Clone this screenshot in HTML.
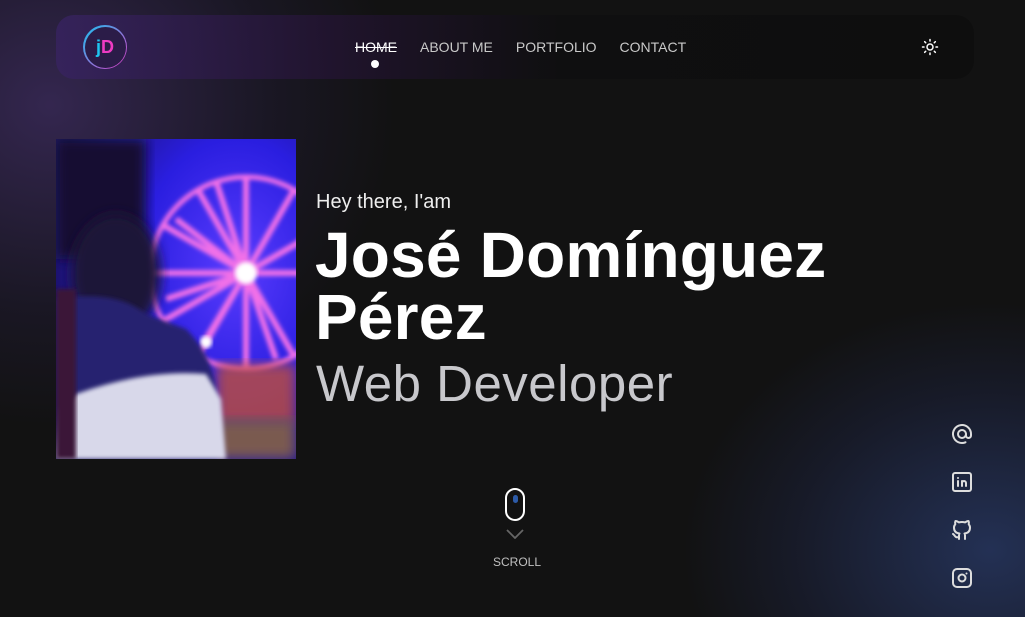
<!DOCTYPE html>
<html><head><meta charset="utf-8"><style>
*{margin:0;padding:0;box-sizing:border-box}
html,body{width:1025px;height:617px;overflow:hidden;background:#121212}
#w{position:relative;width:1025px;height:617px;overflow:hidden;background:#121212;font-family:"Liberation Sans",sans-serif}
.glow1{position:absolute;left:-300px;top:-220px;width:700px;height:650px;background:radial-gradient(ellipse at center,rgba(80,55,130,.55),rgba(45,35,80,.28) 45%,rgba(18,18,18,0) 70%)}
.glow2{position:absolute;left:680px;top:300px;width:620px;height:500px;background:radial-gradient(ellipse at center,rgba(45,65,120,.65),rgba(35,45,90,.3) 45%,rgba(18,18,18,0) 70%)}
.nav{position:absolute;left:56px;top:15px;width:918px;height:64px;border-radius:18px;background:linear-gradient(90deg,rgba(55,35,95,.85),rgba(35,20,50,.8) 30%,#0f0f10 55%,#0e0e0e)}
.logo{position:absolute;left:27px;top:10px;width:44px;height:44px;border-radius:50%;padding:1.5px;background:linear-gradient(135deg,#18c3f0,#e43ac8)}
.logo div{width:100%;height:100%;border-radius:50%;background:#2b1c48;font:bold 18px "Liberation Sans",sans-serif;text-align:center;line-height:41px}
.links{position:absolute;left:299px;top:24px;font-size:14px;color:#c9c9c9;white-space:nowrap}
.links span{margin-right:23px}
.home{color:#fff;text-decoration:line-through}
.dot{position:absolute;left:315px;top:45px;width:8px;height:8px;border-radius:50%;background:#fff}
.photo{position:absolute;left:56px;top:139px;width:240px;height:320px;overflow:hidden}
.t1{position:absolute;left:316px;top:191px;font-size:20px;color:#eee}
.t2{position:absolute;left:315px;top:224px;font-size:64px;font-weight:bold;color:#fff;line-height:62px;letter-spacing:.2px;white-space:nowrap}
.t3{position:absolute;left:316px;top:354px;font-size:51px;color:#c8c8cc;letter-spacing:.5px;white-space:nowrap}
.mouse{position:absolute;left:505px;top:488px;width:20px;height:33px;border:2px solid #fff;border-radius:10px}
.mouse i{position:absolute;left:6px;top:5px;width:5px;height:8px;border-radius:3px;background:#2d5ba8}
.scroll{position:absolute;left:493px;top:555px;font-size:12px;color:#c0c0c0}
.soc{position:absolute;left:950px}
</style></head><body><div id="w">
<div class="glow1"></div><div class="glow2"></div>
<div class="nav">
 <div class="logo"><div><span style="color:#1ec6f0">j</span><span style="color:#ee3bc3">D</span></div></div>
 <div class="links"><span class="home">HOME</span><span>ABOUT ME</span><span>PORTFOLIO</span><span>CONTACT</span></div>
 <div class="dot"></div>
 <svg style="position:absolute;left:865px;top:23px" width="18" height="18" viewBox="0 0 24 24" fill="none" stroke="#fff" stroke-width="2" stroke-linecap="round"><circle cx="12" cy="12" r="4"/><path d="M12 2v2M12 20v2M4.9 4.9l1.4 1.4M17.7 17.7l1.4 1.4M2 12h2M20 12h2M4.9 19.1l1.4-1.4M17.7 6.3l1.4-1.4"/></svg>
</div>
<div class="photo">
<svg width="240" height="320" viewBox="0 0 240 320">
<defs>
<radialGradient id="bg" cx="0.75" cy="0.4" r="0.8"><stop offset="0" stop-color="#5a3cff"/><stop offset=".5" stop-color="#2a1ee0"/><stop offset="1" stop-color="#1a1060"/></radialGradient>
<filter id="b"><feGaussianBlur stdDeviation="2"/></filter><filter id="b2"><feGaussianBlur stdDeviation="6"/></filter>
</defs>
<rect width="240" height="320" fill="url(#bg)"/>
<rect width="90" height="120" fill="#141030" filter="url(#b2)"/>
<g stroke="#f070e8" stroke-width="6" filter="url(#b)">
<circle cx="190" cy="134" r="96" fill="none" stroke-width="5"/>
<path d="M190 134L190 38M190 134L238 51M190 134L273 86M190 134L286 134M190 134L238 217M190 134L190 230M190 134L142 217M190 134L107 182M190 134L94 134M190 134L107 86M190 134L142 51M190 134L160 42M190 134L120 80M190 134L110 160M190 134L150 200M190 134L220 220"/>
</g>
<circle cx="190" cy="134" r="11" fill="#fff" filter="url(#b)"/>
<circle cx="150" cy="203" r="6" fill="#fff" filter="url(#b)"/>
<rect x="160" y="225" width="80" height="60" fill="#c0503a" filter="url(#b2)" opacity=".8"/>
<rect x="160" y="280" width="80" height="40" fill="#7a5a50" filter="url(#b2)"/>
<ellipse cx="60" cy="135" rx="45" ry="60" fill="#1c1438" filter="url(#b2)"/>
<path d="M0 160 Q60 150 90 175 L130 190 Q160 220 160 260 L160 320 L0 320Z" fill="#262070" filter="url(#b)"/>
<path d="M20 255 Q90 230 150 235 L165 260 L170 320 L0 320 L5 270Z" fill="#d8d8ea" filter="url(#b)"/>
<rect x="0" y="150" width="20" height="170" fill="#3a1838" filter="url(#b)"/>
</svg>
</div>
<div class="t1">Hey there, I'am</div>
<div class="t2">José Domínguez<br>Pérez</div>
<div class="t3">Web Developer</div>
<div class="mouse"><i></i></div>
<svg style="position:absolute;left:506px;top:529px" width="18" height="10" viewBox="0 0 18 10"><path d="M1 1l8 8 8-8" fill="none" stroke="#666" stroke-width="1.8"/></svg>
<div class="scroll">SCROLL</div>
<svg class="soc" style="top:422px" width="24" height="24" viewBox="0 0 24 24" fill="none" stroke="#ddd" stroke-width="2" stroke-linecap="round"><circle cx="12" cy="12" r="4"/><path d="M16 12v1.5a2.5 2.5 0 0 0 5 0V12a9 9 0 1 0-5.5 8.3"/></svg>
<svg class="soc" style="top:470px" width="24" height="24" viewBox="0 0 24 24" fill="none" stroke="#ddd" stroke-width="2" stroke-linecap="round"><rect x="3" y="3" width="18" height="18" rx="2"/><path d="M8 11v5M8 8v.01M12 16v-5M16 16v-3a2 2 0 0 0-4 0"/></svg>
<svg class="soc" style="top:518px" width="24" height="24" viewBox="0 0 24 24" fill="none" stroke="#ddd" stroke-width="2" stroke-linecap="round" stroke-linejoin="round"><path d="M9 19c-4.3 1.4-4.3-2.5-6-3m12 5v-3.5c0-1 .1-1.4-.5-2 2.8-.3 5.5-1.4 5.5-6a4.6 4.6 0 0 0-1.3-3.2 4.2 4.2 0 0 0-.1-3.2s-1.1-.3-3.5 1.3a12.3 12.3 0 0 0-6.2 0C6.5 2.8 5.4 3.1 5.4 3.1a4.2 4.2 0 0 0-.1 3.2A4.6 4.6 0 0 0 4 9.5c0 4.6 2.7 5.7 5.5 6-.6.6-.6 1.2-.5 2V21"/></svg>
<svg class="soc" style="top:566px" width="24" height="24" viewBox="0 0 24 24" fill="none" stroke="#ddd" stroke-width="2" stroke-linecap="round"><rect x="3" y="3" width="18" height="18" rx="4"/><circle cx="12" cy="12" r="3.5"/><path d="M16.5 7.5v.01"/></svg>
</div></body></html>
